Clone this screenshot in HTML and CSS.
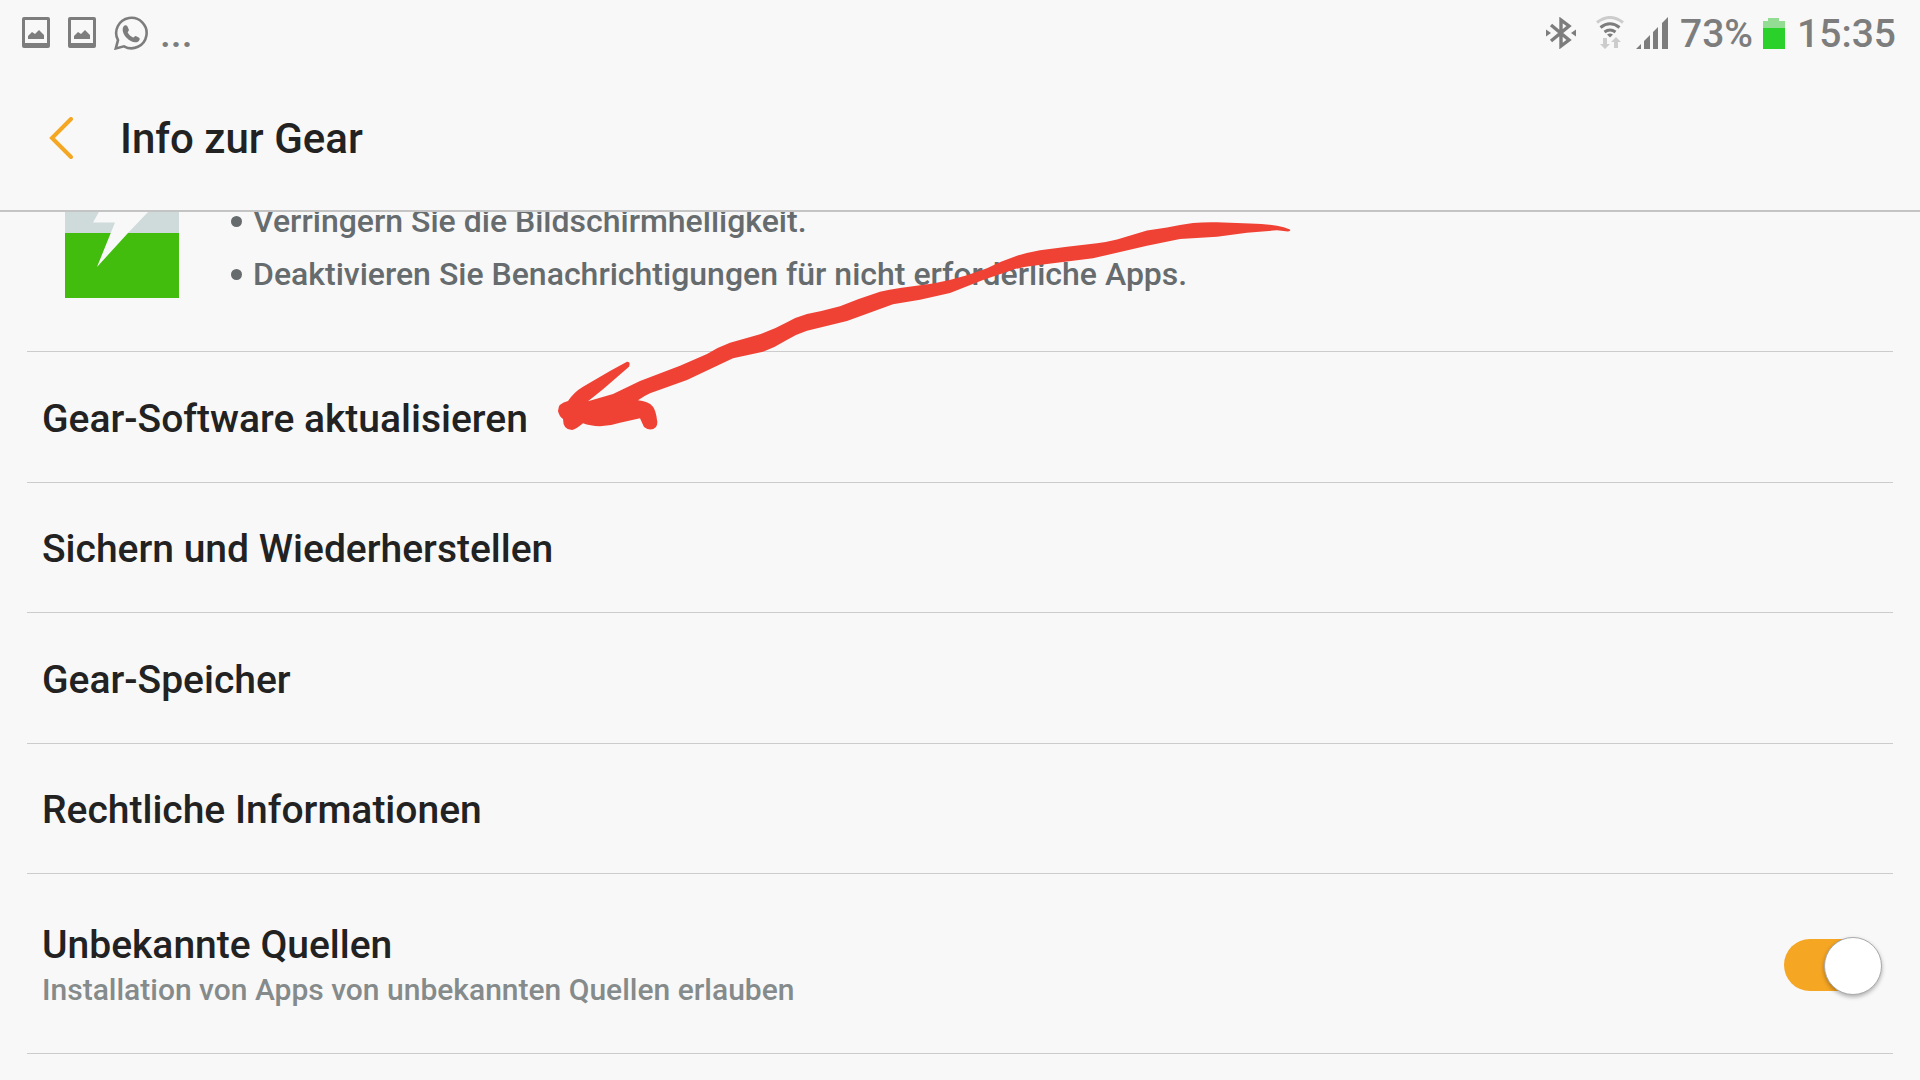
FILE: index.html
```
<!DOCTYPE html>
<html lang="de">
<head>
    <meta charset="UTF-8">
    <meta name="viewport" content="width=device-width, initial-scale=1.0">
    <title>Info zur Gear</title>
    <link rel="stylesheet" href="styles.css">
</head>
<body>
    <div class="status-bar">
        <div class="status-left">
            <svg class="icon-image" viewBox="0 0 28 32" aria-hidden="true">
                <path fill-rule="evenodd" d="M2 0h24a2 2 0 0 1 2 2v27a2 2 0 0 1-2 2H2a2 2 0 0 1-2-2V2a2 2 0 0 1 2-2zM3 3v23h22V3z"/>
                <path d="M6 22v-3l4-4 3 2 4-4 5 5v4z"/>
            </svg>
            <svg class="icon-image" viewBox="0 0 28 32" aria-hidden="true">
                <path fill-rule="evenodd" d="M2 0h24a2 2 0 0 1 2 2v27a2 2 0 0 1-2 2H2a2 2 0 0 1-2-2V2a2 2 0 0 1 2-2zM3 3v23h22V3z"/>
                <path d="M6 22v-3l4-4 3 2 4-4 5 5v4z"/>
            </svg>
            <svg class="icon-whatsapp" viewBox="0 0 34 34" aria-hidden="true">
                <path fill="none" stroke="#7d7d7d" stroke-width="2.6" d="M1.8 32.4l2.2-8.2A15.2 15.2 0 1 1 10 30.3z"/>
                <path d="M9.500 10.500c1-1.600 3.200-1.600 4 0l1.400 3.200c.3 1-1.400 2.200-1.200 2.800 1.200 2.300 3 4 5.400 5 .8.300 1.700-1.700 2.700-1.400l3.300 1.600c1.200.700.6 2.800-.8 3.700-3.300 2.200-8.300-.2-11.500-3.400-3.400-3.500-5.300-8.200-3.300-11.500z"/>
            </svg>
            <span>...</span>
        </div>
        <div class="status-right">
            <svg class="icon-bluetooth" viewBox="0 0 30 32" aria-hidden="true">
                <path fill="none" stroke="#7d7d7d" stroke-width="3.400" d="M5 8l18 15-8 6V3l8 6L5 24"/>
                <path d="M0 12.500l5 3.500-5 3.500zM30 12.500L25 16l5 3.500z"/>
            </svg>
            <svg class="icon-wifi" viewBox="0 0 28 34" aria-hidden="true">
                <path class="faint-line" d="M1 6.500q13-10 26 0"/>
                <path class="line" d="M4.500 11.500q9.500-7.500 19 0M8.500 16q5.500-4 11 0"/>
                <path d="M11 18.500q3-2 6 0l-3 3z"/>
                <path class="faint" d="M7 22h4v6h3l-5 5-5-5h3zM18 32h4v-6h3l-5-5-5 5h3z"/>
            </svg>
            <svg class="icon-signal" viewBox="0 0 32 32" aria-hidden="true">
                <path d="M0 32l5-5v5zM8 24l6-6v14H8zM17 15l5-5v22h-5zM26 6l6-6v32h-6z"/>
            </svg>
            <span>73%</span>
            <svg class="icon-battery" viewBox="0 0 22 32" aria-hidden="true">
                <path fill="#93dc93" d="M0 4h5V1h11v3h6v28H0z"/>
                <path fill="#2bd12b" d="M0 11h22v21H0z"/>
            </svg>
            <span>15:35</span>
        </div>
    </div>

    <header class="title-bar">
        <button class="back-btn" type="button" aria-label="Zurück">
            <svg viewBox="0 0 24 42"><path d="M22 2L3 21l19 19"/></svg>
        </button>
        <h1>Info zur Gear</h1>
    </header>

    <main>
        <section class="tips">
            <svg class="charge-icon" viewBox="0 0 114 88" aria-hidden="true">
                <path fill="#cfdadb" d="M0 0h114v23H0z"/>
                <path fill="#43bd0d" d="M0 23h114v65H0z"/>
                <path fill="#f8f8f8" d="M35 0l-7 12.500h22L32 57l31-34L85 0z"/>
            </svg>
            <ul>
                <li>Verringern Sie die Bildschirmhelligkeit.</li>
                <li>Deaktivieren Sie Benachrichtigungen für nicht erforderliche Apps.</li>
            </ul>
        </section>

        <nav>
            <a class="row" href="#software">Gear-Software aktualisieren</a>
            <a class="row" href="#sichern">Sichern und Wiederherstellen</a>
            <a class="row" href="#speicher">Gear-Speicher</a>
            <a class="row" href="#rechtliches">Rechtliche Informationen</a>
        </nav>

        <div class="row row-switch">
            <label for="quellen">
                Unbekannte Quellen
                <small>Installation von Apps von unbekannten Quellen erlauben</small>
            </label>
            <input class="switch" type="checkbox" id="quellen" checked>
        </div>

        <!-- Handgezeichneter Pfeil auf "Gear-Software aktualisieren" -->
        <svg class="arrow" viewBox="550 212 750 230" aria-hidden="true">
            <path d="M1290 229.500Q1284 227 1277 225.700Q1265 223.800 1250 223.500L1217 222.300Q1204 222 1193 223Q1180 224.500 1167 227.500L1147 230.500L1117 239.500Q1107 242 1097 243.300L1067 246.700L1040 250.300Q1028 252.500 1017 255.700Q1001 261 987 268.300L967 275.300Q950 280.500 933 283.500L900 288Q889 289.500 880 291.700Q860 298 840 306.300Q823 311 807 314Q796 317 787 322.300Q774 329.500 760 334.300L730 342.700Q718 347 707 354L680 365.700L640 381L613 394L588 401.300L603 389.300L629 366.700Q631 361.500 627 361.700Q619 366 610 371L583 386.700Q574 392 568 401Q558 403 558 411Q559 416 563 419Q563 430 572 430Q575 430 583 423.300Q590 426 600 426.300Q610 426 620 422.700L640 418.300L644 427Q651 432 656 427Q658 424 657 420Q656 411 653 406.700Q648 401 638 400.300Q644 396 650 393.300L687 380L733 358.300L763 351.700Q774 348 785 341Q796 334 807 330.700L847 321L893 304.300L920 299.700L950 293L983 280L1010 270.700Q1021 267 1033 265.700L1093 258.300L1147 245.700L1180 239L1217 236.700L1247 232.700L1277 230.300L1288 231.500Q1291 231 1290 229.500z"/>
        </svg>
    </main>
</body>
</html>
```
FILE: styles.css
```
:root {
    --bg: #f8f8f8;
    --text: #222;
    --grey: #7d7d7d;
    --line: #ccc;
    --accent: #f5a623;
}

* {
    box-sizing: border-box;
}

body {
    margin: 0;
    min-height: 100vh;
    background: var(--bg);
    color: var(--text);
    font-family: Roboto, sans-serif;
    font-weight: 500;
    overflow-x: hidden;
}

/* Statusleiste */
.status-bar {
    display: flex;
    justify-content: space-between;
    height: 66px;
    padding: 0 24px 0 22px;
    color: var(--grey);
    fill: var(--grey);
    font-size: 39px;
    line-height: 48px;
}

.status-left,
.status-right {
    display: flex;
    align-items: center;
    gap: 12px;
}

.status-bar span {
    padding-top: 2px;
}

.icon-image { width: 28px; height: 32px; margin-right: 6px; }
.icon-whatsapp { width: 34px; height: 34px; }
.icon-bluetooth { width: 30px; height: 32px; margin-right: 8px; }
.icon-wifi { width: 28px; height: 34px; }
.icon-signal { width: 32px; height: 32px; }
.icon-battery { width: 22px; height: 32px; margin-left: -2px; }

.icon-wifi .line { fill: none; stroke: var(--grey); stroke-width: 3; }
.icon-wifi .faint-line { fill: none; stroke: #ccc; stroke-width: 3; }
.icon-wifi .faint { fill: #ccc; }

/* Titelleiste */
.title-bar {
    display: flex;
    align-items: center;
    gap: 32px;
    height: 146px;
    padding: 0 34px;
    border-bottom: 2px solid #c4c4c4;
}

.title-bar h1 {
    margin: 0;
    font-size: 42px;
    font-weight: 500;
}

.back-btn {
    display: flex;
    justify-content: center;
    width: 54px;
    padding: 0;
    border: none;
    background: none;
    cursor: pointer;
}

.back-btn svg {
    width: 24px;
    height: 42px;
    fill: none;
    stroke: var(--accent);
    stroke-width: 4;
    stroke-linecap: round;
}

main {
    position: relative;
    padding: 0 27px;
}

/* Akku-Tipps, oben vom Scrollen abgeschnitten */
.tips {
    display: flex;
    align-items: flex-end;
    gap: 52px;
    height: 140px;
    padding: 0 38px 50px;
    border-bottom: 1px solid var(--line);
    overflow: hidden;
}

.charge-icon {
    width: 114px;
    height: 88px;
    margin-bottom: 3px;
}

.tips ul {
    margin: 0;
    padding: 0;
    list-style: none;
    color: #666b6d;
    font-size: 32px;
    line-height: 53px;
}

.tips li {
    display: flex;
    align-items: center;
    gap: 11px;
}

.tips li::before {
    content: "";
    width: 11px;
    height: 11px;
    border-radius: 50%;
    background: #666b6d;
}

/* Menüzeilen */
nav {
    display: grid;
    grid-auto-rows: 1fr;
    min-height: 522px;
}

.row {
    display: flex;
    align-items: center;
    padding: 4px 15px 0;
    border-bottom: 1px solid var(--line);
    color: var(--text);
    font-size: 39px;
    text-decoration: none;
}

.row-switch {
    justify-content: space-between;
    min-height: 180px;
    padding-top: 2px;
}

.row-switch small {
    display: block;
    margin-top: 4px;
    color: #858a8b;
    font-size: 30px;
}

.switch {
    appearance: none;
    position: relative;
    width: 94px;
    height: 52px;
    margin: 0;
    border-radius: 26px;
    background: #bbb;
    cursor: pointer;
}

.switch:checked {
    background: var(--accent);
}

.switch::before {
    content: "";
    position: absolute;
    top: -2px;
    left: -4px;
    width: 56px;
    height: 56px;
    border: 1px solid #aaa;
    border-radius: 50%;
    background: #fff;
    box-shadow: 0 2px 4px rgba(0,0,0,0.3);
}

.switch:checked::before {
    left: auto;
    right: -4px;
}

.arrow {
    position: absolute;
    top: 0;
    left: 550px;
    width: 750px;
    height: 230px;
    fill: #f04234;
    pointer-events: none;
}
```
